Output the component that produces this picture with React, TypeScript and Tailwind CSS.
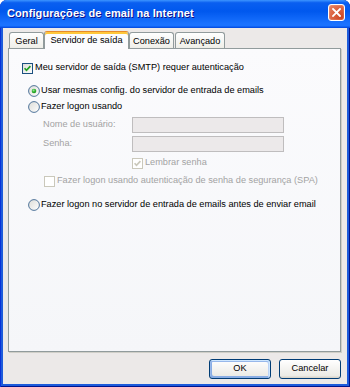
import React from "react";

const FONT = "font-['Liberation_Sans',Arial,sans-serif]";

function CheckBox({ checked, disabled }: { checked?: boolean; disabled?: boolean }) {
  const border = disabled ? "#CAC8BB" : "#1C5180";
  const tick = disabled ? "#CAC8BB" : "#21A121";
  return (
    <svg width="11" height="11" viewBox="0 0 11 11" className="shrink-0">
      <defs>
        <linearGradient id={disabled ? "cbd" : "cbg"} x1="0" y1="0" x2="1" y2="1">
          <stop offset="0" stopColor={disabled ? "#FFFFFF" : "#DCDCD7"} />
          <stop offset="1" stopColor="#FFFFFF" />
        </linearGradient>
      </defs>
      <rect x="0.5" y="0.5" width="10" height="10" fill={`url(#${disabled ? "cbd" : "cbg"})`} stroke={border} />
      {checked && (
        <polyline points="2.6,5.2 4.5,7.3 8.4,3.2" fill="none" stroke={tick} strokeWidth="1.7" />
      )}
    </svg>
  );
}

function Radio({ checked }: { checked?: boolean }) {
  return (
    <svg width="12" height="12" viewBox="0 0 12 12" className="shrink-0">
      <defs>
        <linearGradient id="rg" x1="0" y1="0" x2="1" y2="1">
          <stop offset="0" stopColor="#DCDCD7" />
          <stop offset="1" stopColor="#FFFFFF" />
        </linearGradient>
        <radialGradient id="rdot" cx="0.4" cy="0.35" r="0.7">
          <stop offset="0" stopColor="#9BE89B" />
          <stop offset="0.5" stopColor="#34B534" />
          <stop offset="1" stopColor="#1A8E1A" />
        </radialGradient>
      </defs>
      <circle cx="6" cy="6" r="5.4" fill="url(#rg)" stroke="#3E6791" strokeWidth="0.9" />
      {checked && <circle cx="6" cy="6" r="2.3" fill="url(#rdot)" />}
    </svg>
  );
}

function Tab({ label, selected, w, className = "" }: { label: string; selected?: boolean; w: string; className?: string }) {
  if (selected) {
    return (
      <div
        className={`${w} h-[18px] -mb-[1px] z-10 relative flex items-start justify-center pt-[3px] bg-[#FCFCFE] border border-b-0 border-[#919B9C] border-t-[#E68B2C] rounded-t-[3px] shadow-[inset_0_2px_#FFC83C] ${className}`}
      >
        <span className="leading-[11px]">{label}</span>
      </div>
    );
  }
  return (
    <div
      className={`${w} h-[16px] flex items-center justify-center bg-[linear-gradient(180deg,#fff,#fafaf9_26%,#f0f0ea_95%,#ecebe5)] border border-b-0 border-[#919B9C] rounded-t-[3px] ${className}`}
    >
      <span className="leading-[11px] pt-[1px]">{label}</span>
    </div>
  );
}

export default function App() {
  return (
    <div className={`w-[350px] h-[387px] bg-white ${FONT} text-[9.2px] text-black`}>
      <div className="w-full h-full flex flex-col rounded-t-[7px] overflow-hidden bg-[#1D5BDB] shadow-[inset_1px_0_#0831D9,inset_-1px_0_#00138C,inset_0_-1px_#00138C]">
        {/* title bar */}
        <div className="h-[28px] shrink-0 flex items-center justify-between pl-[7px] pr-[5px] bg-[linear-gradient(180deg,#3D95FF,#0A5FF0_10%,#0058EE_40%,#1A72FF_85%,#1A72FF_92%,#0A5CF0_96%,#0344D8)]">
          <span className="text-white font-bold text-[11px] tracking-[0.1px] [text-shadow:1px_1px_#0F1089] leading-none -mt-[1px]">
            Configurações de email na Internet
          </span>
          <div className="w-[17px] h-[17px] -mt-[3px] rounded-[3px] border border-white flex items-center justify-center bg-[radial-gradient(circle_at_80%_80%,#CC4622_0%,#DC6644_55%,#E88A6A_100%)] shadow-[inset_0_0_1px_#fff]">
            <svg width="9" height="9" viewBox="0 0 9 9">
              <path d="M1 1 L8 8 M8 1 L1 8" stroke="#fff" strokeWidth="1.8" strokeLinecap="square" />
            </svg>
          </div>
        </div>
        {/* body */}
        <div className="flex-1 mx-[3px] mb-[3px] bg-[#ECE9E8] flex flex-col pl-[5px] pr-[6px] pt-[3px]">
          {/* tabs */}
          <div className="h-[17px] flex items-end pl-[1px]">
            <Tab label="Geral" w="w-[35px]" />
            <Tab label="Servidor de saída" selected w="w-[85px]" />
            <Tab label="Conexão" w="w-[45px]" />
            <Tab label="Avançado" w="w-[50px]" className="ml-[1px]" />
          </div>
          {/* panel */}
          <div className="h-[304px] border border-[#919B9C] bg-[linear-gradient(180deg,#FBFBFD,#F5F6F9)] shadow-[1px_1px_#D0CFC8] pl-[13px] flex flex-col">
            <div className="mt-[12px] h-[14px] flex items-center gap-[2px]">
              <CheckBox checked />
              <span>Meu servidor de saída (SMTP) requer autenticação</span>
            </div>
            <div className="mt-[9px] h-[14px] flex items-center gap-[1px] ml-[6px]">
              <Radio checked />
              <span>Usar mesmas config. do servidor de entrada de emails</span>
            </div>
            <div className="mt-[2px] h-[14px] flex items-center gap-[1px] ml-[6px]">
              <Radio />
              <span>Fazer logon usando</span>
            </div>
            <div className="mt-[3px] h-[16px] flex items-center ml-[21px] text-[#A3A3A3]">
              <span className="w-[89px]">Nome de usuário:</span>
              <div className="w-[152px] h-[16px] bg-[#ECE9EA] border border-[#BFBDBE]" />
            </div>
            <div className="mt-[3px] h-[16px] flex items-center ml-[21px] text-[#A3A3A3]">
              <span className="w-[89px]">Senha:</span>
              <div className="w-[152px] h-[16px] bg-[#ECE9EA] border border-[#BFBDBE]" />
            </div>
            <div className="mt-[4px] h-[14px] flex items-center gap-[2px] ml-[110px] text-[#A3A3A3]">
              <CheckBox checked disabled />
              <span>Lembrar senha</span>
            </div>
            <div className="mt-[4px] h-[14px] flex items-center gap-[2px] ml-[22px] text-[#A3A3A3]">
              <CheckBox disabled />
              <span>Fazer logon usando autenticação de senha de segurança (SPA)</span>
            </div>
            <div className="mt-[10px] h-[14px] flex items-center gap-[1px] ml-[6px]">
              <Radio />
              <span>Fazer logon no servidor de entrada de emails antes de enviar email</span>
            </div>
          </div>
          {/* buttons */}
          <div className="mt-[7px] flex justify-end gap-[8px]">
            <button className="w-[62px] h-[20px] rounded-[3px] border border-[#003C74] bg-[linear-gradient(180deg,#fff,#ecebe6_86%,#d6d0c5)] shadow-[inset_-1px_1px_#cee7ff,inset_1px_2px_#98b8ea,inset_-2px_2px_#bcd4f6,inset_1px_-1px_#89ade4,inset_2px_-2px_#89ade4] flex items-center justify-center leading-none">
              OK
            </button>
            <button className="w-[62px] h-[20px] rounded-[3px] border border-[#003C74] bg-[linear-gradient(180deg,#fff,#ecebe6_86%,#d6d0c5)] flex items-center justify-center leading-none">
              Cancelar
            </button>
          </div>
        </div>
      </div>
    </div>
  );
}
